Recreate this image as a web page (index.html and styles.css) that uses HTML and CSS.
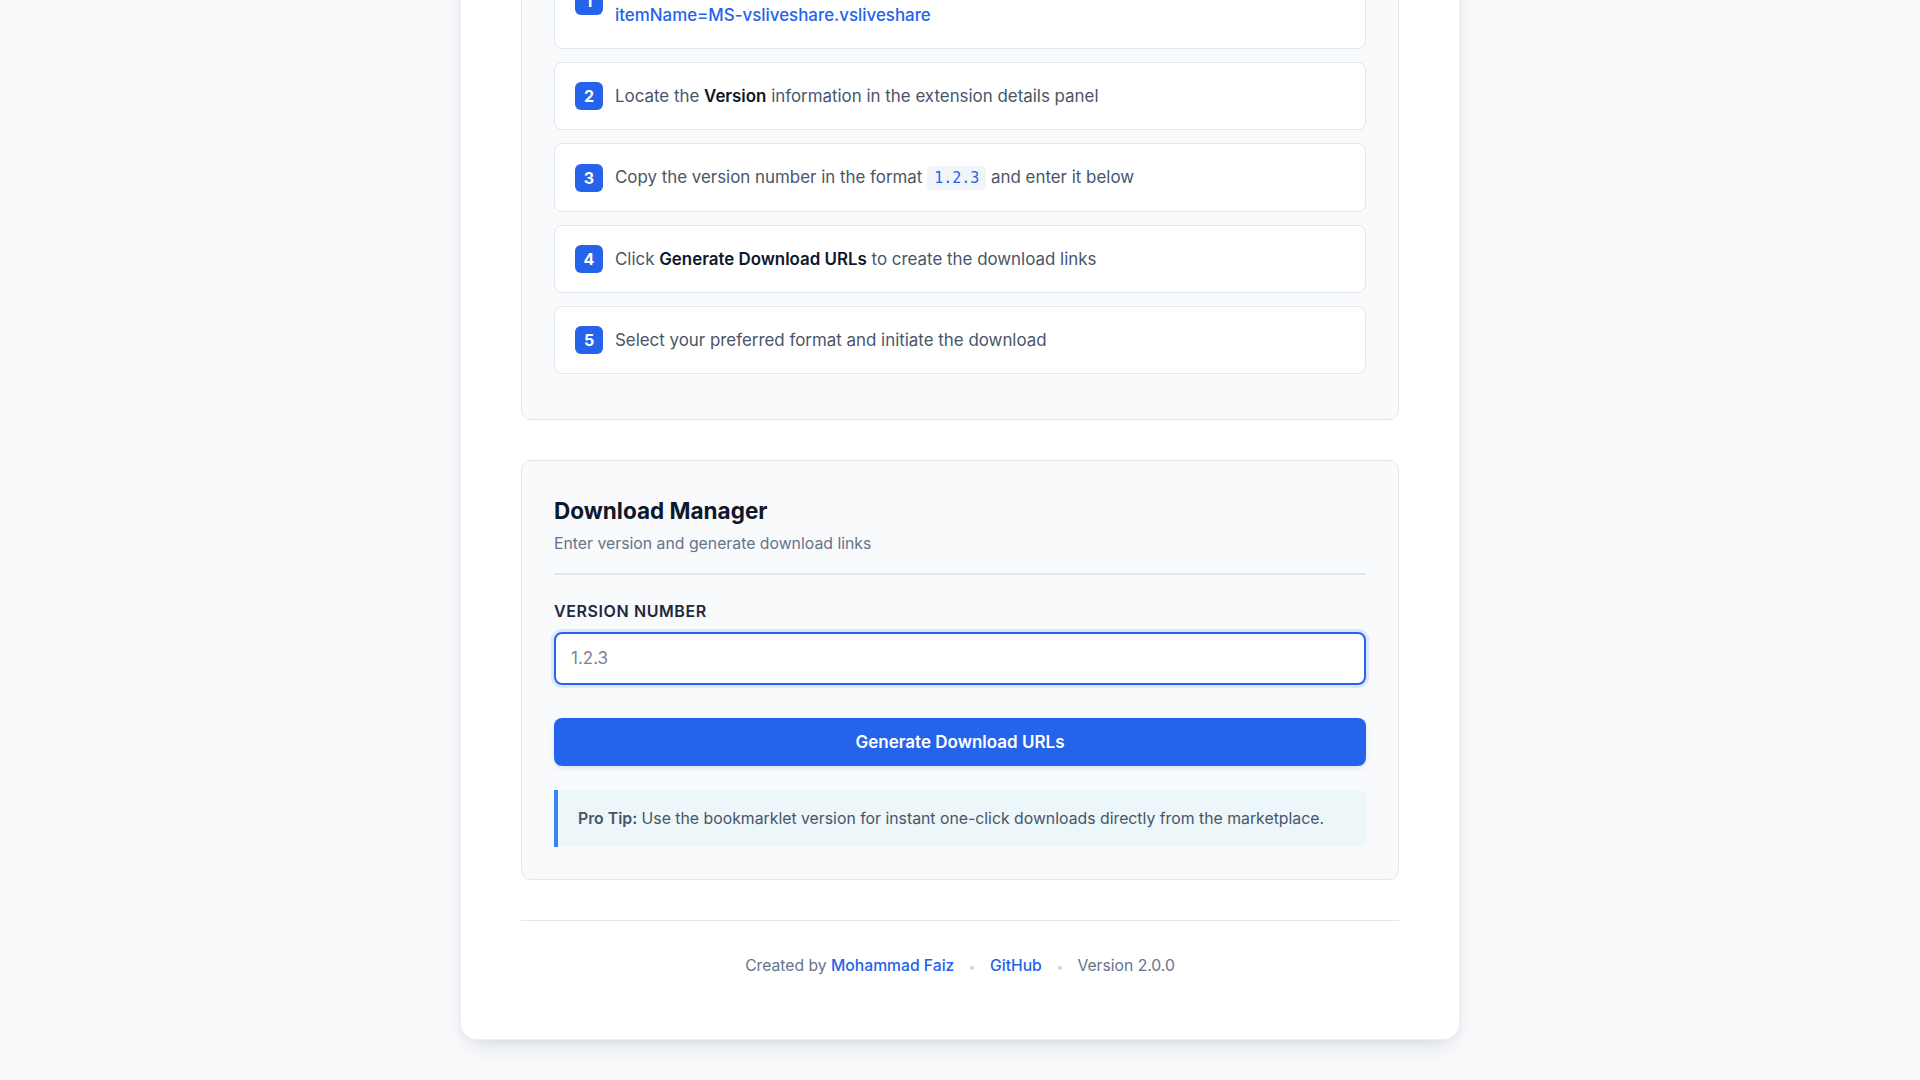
FILE: index.html
```html
<!DOCTYPE html>
<html lang="en">
<head>
    <meta charset="utf-8">
    <meta name="viewport" content="width=device-width">
    <title>VSIX Downloader</title>
    <link rel="stylesheet" href="styles.css">
</head>
<body>
    <main class="card">
        <header class="hero">
            <div class="hero-icon">
                <svg width="32" height="32" viewBox="0 0 24 24" fill="none" stroke="#fff" stroke-width="2" stroke-linecap="round" stroke-linejoin="round">
                    <path d="M12 3v12"/><path d="M7 10l5 5 5-5"/><path d="M5 20h14"/>
                </svg>
            </div>
            <h1 class="hero-title">VS Code Extension Downloader</h1>
            <p class="hero-sub">Download any extension from the Visual Studio Marketplace as a VSIX package for offline installation.</p>
            <div class="chips">
                <span class="chip">Offline install</span>
                <span class="chip">Any version</span>
                <span class="chip">No sign-in</span>
            </div>
        </header>

        <section class="panel">
            <h2 class="panel-title">How to Download</h2>
            <p class="panel-sub">Follow these steps to get the extension package</p>
            <hr class="panel-rule">
            <ol class="steps">
                <li class="step">
                    <span class="step-num">1</span>
                    <span class="step-text">Open the extension page, e.g. <a class="link" href="#">https://marketplace.visualstudio.com/items?<wbr>itemName=MS-vsliveshare.vsliveshare</a></span>
                </li>
                <li class="step">
                    <span class="step-num">2</span>
                    <span class="step-text">Locate the <b>Version</b> information in the extension details panel</span>
                </li>
                <li class="step">
                    <span class="step-num">3</span>
                    <span class="step-text">Copy the version number in the format <code class="code">1.2.3</code> and enter it below</span>
                </li>
                <li class="step">
                    <span class="step-num">4</span>
                    <span class="step-text">Click <b>Generate Download URLs</b> to create the download links</span>
                </li>
                <li class="step">
                    <span class="step-num">5</span>
                    <span class="step-text">Select your preferred format and initiate the download</span>
                </li>
            </ol>
        </section>

        <section class="panel">
            <h2 class="panel-title">Download Manager</h2>
            <p class="panel-sub">Enter version and generate download links</p>
            <hr class="panel-rule">
            <label class="field-label" for="version">Version Number</label>
            <input class="field-input" id="version" type="text" placeholder="1.2.3">
            <button class="btn-primary" type="button">Generate Download URLs</button>
            <div class="tip"><b>Pro Tip:</b> Use the bookmarklet version for instant one-click downloads directly from the marketplace.</div>
        </section>

        <footer class="footer">
            Created by <a class="link" href="#">Mohammad Faiz</a>
            <span class="sep">•</span>
            <a class="link" href="#">GitHub</a>
            <span class="sep">•</span>
            <span>Version 2.0.0</span>
        </footer>
    </main>
    <script src="script.js"></script>
</body>
</html>
```

FILE: styles.css
```css
body {
    margin: 0;
    padding: 40px 20px;
    background: #f8fafc;
    font-family: Inter, "Noto Sans", sans-serif;
    color: #0f172a;
}
.card {
    box-sizing: border-box;
    width: 1000px;
    margin: 0 auto;
    padding: 60px;
    background: #ffffff;
    border: 1px solid #eceff3;
    border-radius: 16px;
    box-shadow: 0 12px 28px -10px rgba(15, 23, 42, 0.14), 0 2px 6px rgba(15, 23, 42, 0.04);
}

/* header */
.hero { text-align: center; margin-bottom: 40px; }
.hero-icon {
    width: 64px;
    height: 64px;
    margin: 0 auto 24px;
    border-radius: 16px;
    background: #2563eb;
    display: flex;
    align-items: center;
    justify-content: center;
}
.hero-title { margin: 0 0 12px; font-size: 34px; font-weight: 700; }
.hero-sub { margin: 0 auto 24px; max-width: 620px; font-size: 17px; line-height: 1.6; color: #64748b; }
.chips { display: flex; justify-content: center; gap: 10px; }
.chip {
    padding: 6px 14px;
    border-radius: 999px;
    background: #eff6ff;
    color: #2563eb;
    font-size: 14px;
    font-weight: 500;
}

/* panels */
.panel {
    padding: 32px;
    margin-bottom: 40px;
    background: #f8fafc;
    border: 1px solid #e2e8f0;
    border-radius: 10px;
}
.panel-title { margin: 0 0 3px; font-size: 22.5px; line-height: 36px; font-weight: 700; color: #0f172a; }
.panel-sub { margin: 0; font-size: 15.8px; line-height: 24px; color: #64748b; }
.panel-rule { margin: 17px 0 25px; border: 0; border-top: 2px solid #e2e8f0; }

/* steps */
.steps { list-style: none; margin: 0; padding: 0; }
.step {
    display: flex;
    align-items: center;
    gap: 12px;
    padding: 19px 20px;
    margin-bottom: 13px;
    background: #ffffff;
    border: 1px solid #e2e8f0;
    border-radius: 8px;
}
.step-num {
    flex: none;
    width: 28px;
    height: 28px;
    border-radius: 6px;
    background: #2563eb;
    color: #ffffff;
    font-size: 16px;
    font-weight: 700;
    display: flex;
    align-items: center;
    justify-content: center;
}
.step-text { font-size: 16.9px; line-height: 28px; color: #475569; }
.step-text b { color: #0f172a; font-weight: 600; }
.code {
    padding: 3px 7px;
    border-radius: 4px;
    background: #f1f5f9;
    color: #2563eb;
    font-family: "DejaVu Sans Mono", monospace;
    font-size: 15px;
}
.link { color: #2563eb; text-decoration: none; font-weight: 500; }

/* form */
.field-label {
    display: block;
    margin-bottom: 10px;
    font-size: 16px;
    line-height: 22px;
    font-weight: 600;
    letter-spacing: 0.6px;
    text-transform: uppercase;
    color: #1e293b;
}
.field-input {
    box-sizing: border-box;
    display: block;
    width: 100%;
    padding: 14px 15px;
    font-family: inherit;
    font-size: 17px;
    line-height: 21px;
    color: #0f172a;
    background: #ffffff;
    border: 2px solid #2563eb;
    border-radius: 8px;
    outline: none;
    box-shadow: 0 0 0 3px rgba(37, 99, 235, 0.12);
}
.field-input::placeholder { color: #7b8494; }
.btn-primary {
    display: block;
    width: 100%;
    margin-top: 33px;
    padding: 14px;
    font-family: inherit;
    font-size: 17px;
    line-height: 20px;
    font-weight: 600;
    color: #ffffff;
    background: #2563eb;
    border: 0;
    border-radius: 8px;
    box-shadow: 0 2px 4px rgba(37, 99, 235, 0.15);
}
.tip {
    margin-top: 24px;
    padding: 18px 20px;
    font-size: 15.8px;
    line-height: 21px;
    color: #475569;
    background: #edf6f8;
    border-left: 4px solid #3b82f6;
    border-radius: 0 6px 6px 0;
}
.tip b { font-weight: 600; }

/* footer */
.footer {
    padding-top: 33px;
    border-top: 1px solid #e2e8f0;
    text-align: center;
    font-size: 15.7px;
    line-height: 24px;
    color: #64748b;
}
.sep { margin: 0 10px; color: #cbd5e1; font-size: 12px; }
```

FILE: script.js
```js
window.scrollTo(0, document.documentElement.scrollHeight);
```
